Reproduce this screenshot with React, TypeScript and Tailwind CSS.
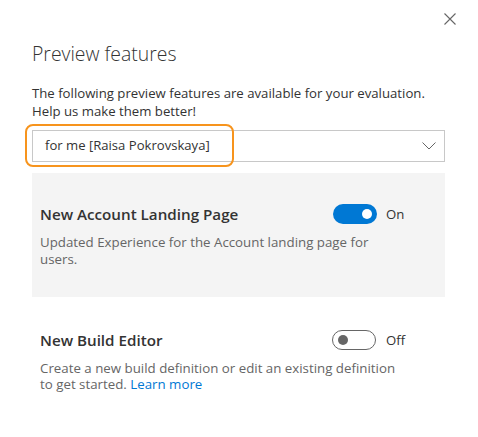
import React from "react";

function Toggle({ on }: { on: boolean }) {
  return on ? (
    <div className="flex h-[20px] w-[44px] items-center justify-end rounded-full bg-[#0078d4] pr-[5px]">
      <div className="h-[10px] w-[10px] rounded-full bg-white" />
    </div>
  ) : (
    <div className="flex h-[20px] w-[44px] items-center justify-start rounded-full border border-[#666666] bg-white pl-[5px]">
      <div className="h-[10px] w-[10px] rounded-full bg-[#666666]" />
    </div>
  );
}

export default function App() {
  return (
    <div
      className="relative flex h-[437px] w-[478px] flex-col bg-white text-[#333333]"
      style={{ fontFamily: '"Open Sans", "Noto Sans", sans-serif' }}
    >
      <div className="flex justify-end pr-[22px] pt-[13px]">
        <button className="flex h-[12px] w-[12px] items-center justify-center text-[#666666]">
          <svg width="12" height="12" viewBox="0 0 12 12" fill="none" stroke="currentColor" strokeWidth="1.1">
            <path d="M0.5 0.5 L11.5 11.5 M11.5 0.5 L0.5 11.5" />
          </svg>
        </button>
      </div>
      <div className="px-[32px] pr-[33px]">
        <h1 className="mt-[15px] text-[19.4px] font-light leading-[28px] text-[#333333]">Preview features</h1>
        <p className="mt-[16px] text-[13.2px] leading-[18px] text-[#333333]">
          The following preview features are available for your evaluation.
          <br />
          Help us make them better!
        </p>
        <div className="relative mt-[10px]">
          <div className="flex h-[32px] items-center justify-between border border-[#c8c8c8] bg-white pl-[12px] pr-[8px]">
            <span className="text-[13.1px] text-[#333333]">for me [Raisa Pokrovskaya]</span>
            <svg width="14" height="8" viewBox="0 0 14 8" fill="none" stroke="#666666" strokeWidth="1">
              <path d="M0.5 0.5 L7 7 L13.5 0.5" />
            </svg>
          </div>
          <div className="pointer-events-none absolute left-[-7px] top-[-6px] h-[43px] w-[209px] rounded-[8px] border-[2px] border-[#f7941d]" />
        </div>
        <div className="mt-[11px] h-[124px] bg-[#f4f4f4] px-[8px] pt-[30px]">
          <div className="flex items-center">
            <div className="w-[293px] text-[15.2px] font-semibold text-[#333333]">New Account Landing Page</div>
            <Toggle on />
            <span className="ml-[9px] text-[13.2px] text-[#333333]">On</span>
          </div>
          <p className="mt-[8px] w-[360px] text-[13.3px] leading-[17px] text-[#666666]">
            Updated Experience for the Account landing page for users.
          </p>
        </div>
        <div className="px-[8px] pt-[32px]">
          <div className="flex items-center">
            <div className="w-[292px] text-[15.2px] font-semibold text-[#333333]">New Build Editor</div>
            <Toggle on={false} />
            <span className="ml-[10px] text-[13.2px] text-[#333333]">Off</span>
          </div>
          <p className="mt-[8px] w-[362px] text-[13.3px] leading-[16px] text-[#666666]">
            Create a new build definition or edit an existing definition to get started.{" "}
            <span className="text-[#0078d4]">Learn more</span>
          </p>
        </div>
      </div>
    </div>
  );
}
